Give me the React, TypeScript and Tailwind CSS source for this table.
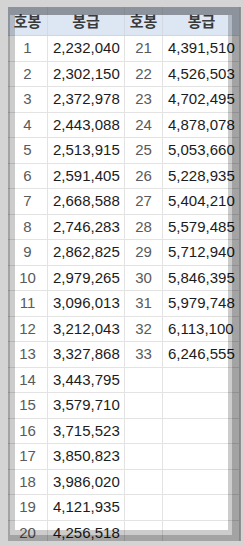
const LEFT = [
  "2,232,040", "2,302,150", "2,372,978", "2,443,088", "2,513,915",
  "2,591,405", "2,668,588", "2,746,283", "2,862,825", "2,979,265",
  "3,096,013", "3,212,043", "3,327,868", "3,443,795", "3,579,710",
  "3,715,523", "3,850,823", "3,986,020", "4,121,935", "4,256,518",
]

const RIGHT = [
  "4,391,510", "4,526,503", "4,702,495", "4,878,078", "5,053,660",
  "5,228,935", "5,404,210", "5,579,485", "5,712,940", "5,846,395",
  "5,979,748", "6,113,100", "6,246,555",
]

const grid = "grid grid-cols-[40px_77px_38px_77px]"

export default function App() {
  return (
    <div className="w-[243px] h-[545px] bg-[#d4d4d4] pt-[7px] pl-[8px] overflow-hidden">
      <div className="relative w-[233px] h-[534px] overflow-hidden bg-[#e4e4e4]">
        {/* table */}
        <div className="w-[232px] border-r border-[#d6d6d6] bg-white font-['Liberation_Sans',Arial,sans-serif]">
          <div className={`${grid} h-[29px] bg-[#dde7f4] text-[15px] font-bold text-[#3a3a3a] border-b border-[#cfd6e0] font-['Noto_Sans_CJK_KR','Noto_Sans',sans-serif]`}>
            <div className="flex items-center justify-center border-r border-[#d4dae3]">호봉</div>
            <div className="flex items-center justify-center border-r border-[#d4dae3]">봉급</div>
            <div className="flex items-center justify-center border-r border-[#d4dae3]">호봉</div>
            <div className="flex items-center justify-center">봉급</div>
          </div>
          {LEFT.map((v, i) => (
            <div key={i} className={`${grid} h-[25.5px] text-[15px] border-b border-[#e3e3e3]`}>
              <div className="flex items-center justify-center text-[#5a5a5a] border-r border-[#e3e3e3]">{i + 1}</div>
              <div className="flex items-center pl-[5px] text-[#1c1c1c] border-r border-[#e3e3e3]">{v}</div>
              <div className="flex items-center justify-center text-[#5a5a5a] border-r border-[#e3e3e3]">
                {RIGHT[i] ? i + 21 : ""}
              </div>
              <div className="flex items-center pl-[5px] text-[#1c1c1c] whitespace-nowrap">{RIGHT[i] ?? ""}</div>
            </div>
          ))}
        </div>

        {/* dimmed frame over the table: two windows, the inner one leaves a lighter rim */}
        <div className="absolute left-[7px] top-[8px] right-[13px] bottom-[11px] pointer-events-none shadow-[0_0_0_60px_rgba(0,0,0,0.2)]" />
        <div className="absolute left-[2px] top-[8px] right-[9px] bottom-[6px] pointer-events-none shadow-[0_0_0_60px_rgba(0,0,0,0.2)]" />
      </div>
    </div>
  )
}
